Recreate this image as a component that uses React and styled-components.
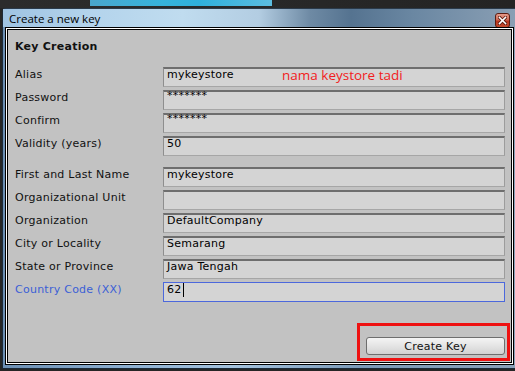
import React from "react"
import styled, { createGlobalStyle } from "styled-components"

const GlobalStyle = createGlobalStyle`
  html, body {
    margin: 0;
    padding: 0;
    background: #262626;
  }
`

const firstGroup = [
  { label: "Alias", value: "mykeystore" },
  { label: "Password", value: "*******", secret: true },
  { label: "Confirm", value: "*******", secret: true },
  { label: "Validity (years)", value: "50" },
]

const secondGroup = [
  { label: "First and Last Name", value: "mykeystore" },
  { label: "Organizational Unit", value: "" },
  { label: "Organization", value: "DefaultCompany" },
  { label: "City or Locality", value: "Semarang" },
  { label: "State or Province", value: "Jawa Tengah" },
  { label: "Country Code (XX)", value: "62", focused: true },
]

const CloseIcon = () => (
  <svg width="9" height="9" viewBox="0 0 9 9">
    <path d="M1.5 1.5 L7.5 7.5 M7.5 1.5 L1.5 7.5" stroke="#5a1a10" strokeWidth="3.2" strokeLinecap="square" />
    <path d="M1.5 1.5 L7.5 7.5 M7.5 1.5 L1.5 7.5" stroke="#fff" strokeWidth="1.6" strokeLinecap="square" />
  </svg>
)

const FieldRow = ({ label, value, secret, focused }) => (
  <>
    <Label focused={focused}>{label}</Label>
    <Field focused={focused} secret={secret}>
      {value}
      {focused && <Caret />}
    </Field>
  </>
)

const App = () => {
  return (
    <Page>
      <GlobalStyle />
      <TopStrip>
        <Glass />
      </TopStrip>

      <Window>
        <TitleBar>
          <Title>Create a new key</Title>
          <CloseBtn>
            <CloseIcon />
          </CloseBtn>
        </TitleBar>

        <Panel>
          <Heading>Key Creation</Heading>

          <Form>
            {firstGroup.map((f) => (
              <FieldRow key={f.label} {...f} />
            ))}
          </Form>

          <Form spaced>
            {secondGroup.map((f) => (
              <FieldRow key={f.label} {...f} />
            ))}
          </Form>

          <Footer>
            <CreateBtn>Create Key</CreateBtn>
          </Footer>

          {/* catatan merah */}
          <Note>nama keystore tadi</Note>
          <Highlight />
        </Panel>
      </Window>
    </Page>
  )
}

export default App

const Page = styled.div`
  width: 515px;
  height: 371px;
  overflow: hidden;
  background: #262626;
`

const TopStrip = styled.div`
  height: 8px;
  display: flex;
  background: linear-gradient(90deg, #2c2c2c, #242424);
`

const Glass = styled.div`
  margin-left: 90px;
  width: 182px;
  height: 6px;
  background: linear-gradient(90deg, #4aa6cc 0%, #36b3dc 40%, #2fb0dc 60%, #5cbde0 100%);
`

const Window = styled.div`
  margin-left: 2px;
  width: 513px;
  height: 361px;
  display: flex;
  flex-direction: column;
  padding-left: 2px;
  padding-right: 1px;
  box-sizing: border-box;
  border-radius: 4px 0 0 0;
  background: linear-gradient(90deg, #6c8fb3 0%, #8fb1d2 25%, #a5c3de 45%, #7c9bb9 70%, #8aa1b8 100%);
  border-left: 1px solid #1c2a38;
  border-top: 1px solid #2a3a4a;
  border-bottom: 1px solid #1c2a38;
`

const TitleBar = styled.div`
  height: 18px;
  display: flex;
  align-items: center;
  justify-content: space-between;
  margin-left: -2px;
  margin-right: -1px;
  padding: 0 5px 0 6px;
  background: linear-gradient(
    90deg,
    #9fc3e2 0%,
    #b4d4ec 18%,
    #c0dcef 35%,
    #b3cde2 50%,
    #6e8aa4 60%,
    #557390 68%,
    #6a87a2 80%,
    #8a9fb4 100%
  );
`

const Title = styled.div`
  font-family: "Open Sans", "Liberation Sans", sans-serif;
  font-size: 11.5px;
  color: #000;
  line-height: 18px;
  padding-top: 1px;
`

const CloseBtn = styled.div`
  width: 15px;
  height: 15px;
  margin-top: 5px;
  box-sizing: border-box;
  display: flex;
  align-items: center;
  justify-content: center;
  border: 1px solid #5d1d12;
  border-radius: 3px;
  background: linear-gradient(180deg, #e49a8a 0%, #d06a55 45%, #b8361f 55%, #c24a2e 100%);
`

const Panel = styled.div`
  position: relative;
  height: 338px;
  box-sizing: border-box;
  border: 1px solid #000;
  box-shadow: inset 0 0 0 1px #fff, inset 0 0 0 2px #000;
  background: #c2c2c2;
  padding: 12px 4px 0 9px;
  font-family: "DejaVu Sans", "Liberation Sans", sans-serif;
  font-size: 11px;
  letter-spacing: 0.25px;
  color: #111;
`

const Heading = styled.div`
  font-weight: bold;
  line-height: 14px;
  margin-bottom: 13px;
`

const Form = styled.div`
  display: grid;
  grid-template-columns: 148px 342px;
  grid-auto-rows: 20px;
  row-gap: 3px;
  margin-top: ${(props) => (props.spaced ? "11px" : "0")};
`

const Label = styled.div`
  line-height: 16px;
  color: ${(props) => (props.focused ? "#3b5fd6" : "#111")};
`

const Field = styled.div`
  display: flex;
  align-items: flex-start;
  box-sizing: border-box;
  padding: 0 3px;
  line-height: ${(props) => (props.secret ? "8px" : "12px")};
  background: #d4d4d4;
  color: #000;
  ${(props) =>
    props.focused
      ? `
    border: 1px solid #4c68dc;
    padding-top: 1px;
  `
      : `
    border-top: 2px solid #6e6e6e;
    border-left: 1px solid #8e8e8e;
    border-right: 1px solid #9c9c9c;
    border-bottom: 1px solid #a6a6a6;
  `}
`

const Caret = styled.span`
  width: 1px;
  height: 14px;
  background: #000;
  margin-left: 1px;
  margin-top: -1px;
`

const Footer = styled.div`
  display: flex;
  justify-content: flex-end;
  margin-top: 35px;
  padding-right: 4px;
`

const CreateBtn = styled.div`
  width: 139px;
  height: 18px;
  box-sizing: border-box;
  display: flex;
  align-items: center;
  justify-content: center;
  border: 1px solid #6e6e6e;
  border-radius: 3px;
  background: linear-gradient(180deg, #f4f4f4 0%, #e4e4e4 50%, #d2d2d2 100%);
  color: #111;
`

const Note = styled.div`
  position: absolute;
  left: 276px;
  top: 38px;
  font-family: "Open Sans", "Liberation Sans", sans-serif;
  font-size: 13.5px;
  letter-spacing: 0;
  color: #f21c1c;
`

const Highlight = styled.div`
  position: absolute;
  left: 351px;
  top: 295px;
  width: 153px;
  height: 38px;
  box-sizing: border-box;
  border: 3px solid #ee1111;
`
